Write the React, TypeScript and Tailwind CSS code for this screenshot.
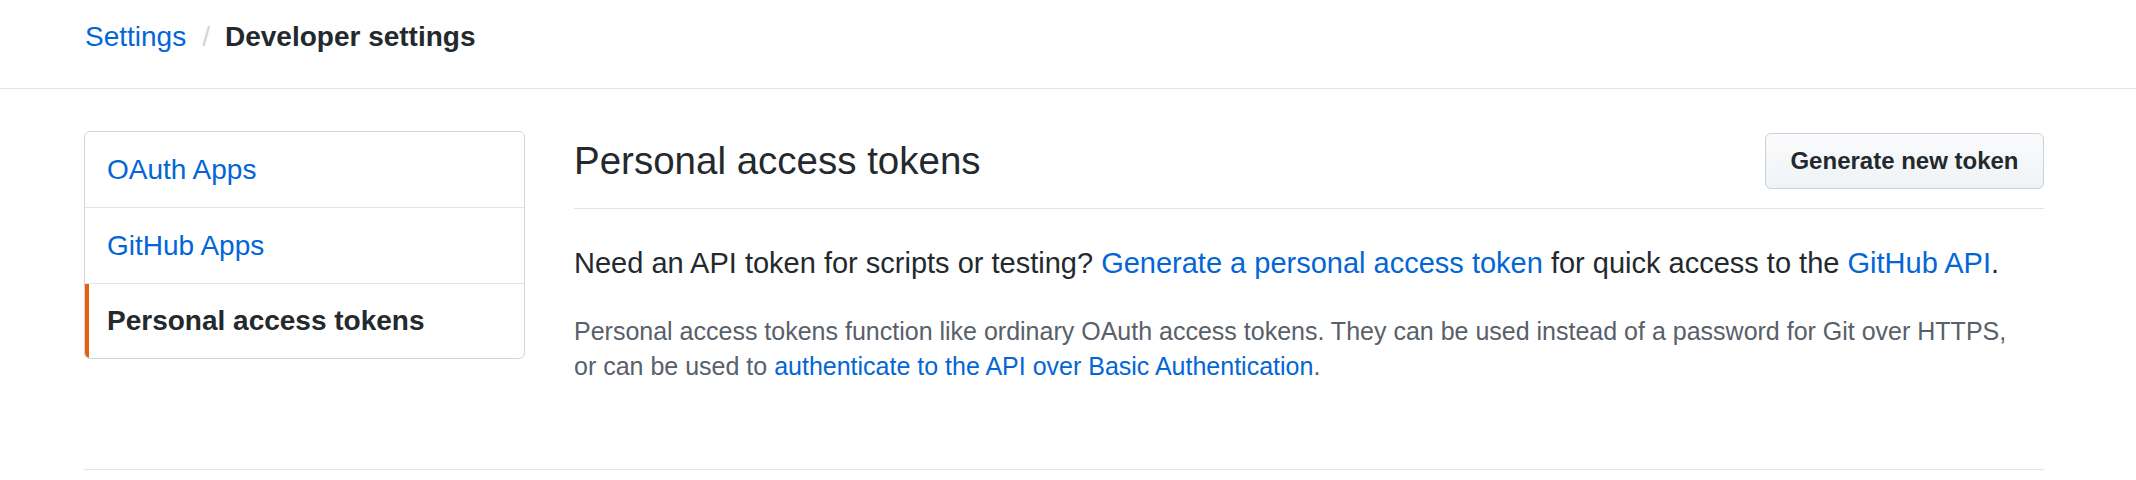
import React from 'react';

const font = { fontFamily: '"Liberation Sans", Arial, sans-serif' };

const App: React.FC = () => {
  return (
    <div className="min-h-screen w-full bg-white text-[#24292e]" style={font}>
      {/* Breadcrumb header */}
      <header className="h-[89px] w-full border-b border-[#e1e4e8] pt-[16px]">
        <div className="ml-[85px] flex items-center text-[28px] leading-[42px]">
          <a className="text-[#0366d6]">Settings</a>
          <span className="ml-[16px] mr-[15px] text-[#d1d5da]">/</span>
          <strong className="font-bold text-[#24292e]">Developer settings</strong>
        </div>
      </header>

      <div className="ml-[84px] w-[1960px]">
        <div className="flex pt-[42px]">
          {/* Sidebar menu */}
          <nav className="w-[441px] shrink-0 self-start overflow-hidden rounded-[6px] border border-[#d1d5da] text-[28px]">
            <a className="flex h-[76px] items-center border-b border-[#e1e4e8] pl-[22px] text-[#0366d6]">
              OAuth Apps
            </a>
            <a className="flex h-[76px] items-center border-b border-[#e1e4e8] pl-[22px] text-[#0366d6]">
              GitHub Apps
            </a>
            <a className="relative flex h-[74px] items-center pl-[22px] font-bold text-[#24292e]">
              <span className="absolute bottom-0 left-0 top-0 w-[4px] bg-[#e36209]" />
              Personal access tokens
            </a>
          </nav>

          {/* Main content */}
          <main className="ml-[49px] flex-1">
            <div className="flex items-center justify-between border-b border-[#e1e4e8] pb-[19px] pt-px">
              <h2 className="text-[38.5px] font-normal leading-[57px]">Personal access tokens</h2>
              <button className="flex h-[56px] w-[279px] items-center justify-center rounded-[6px] border border-[#cdd0d4] bg-linear-to-b from-[#fafbfc] to-[#eff3f6] text-[24px] font-bold text-[#24292e]">
                Generate new token
              </button>
            </div>

            <p className="mt-[33px] whitespace-nowrap text-[29px] leading-[42px]">
              Need an API token for scripts or testing?{' '}
              <a className="text-[#0366d6]">Generate a personal access token</a> for quick access to the{' '}
              <a className="text-[#0366d6]">GitHub API</a>.
            </p>

            <p className="mt-[30px] whitespace-nowrap text-[25px] leading-[35px] text-[#586069]">
              Personal access tokens function like ordinary OAuth access tokens. They can be used instead of a password for Git over HTTPS,
              <br />
              or can be used to <a className="text-[#0366d6]">authenticate to the API over Basic Authentication</a>.
            </p>
          </main>
        </div>

        <footer className="mt-[85px] border-t border-[#e1e4e8]" />
      </div>
    </div>
  );
};

export default App;
